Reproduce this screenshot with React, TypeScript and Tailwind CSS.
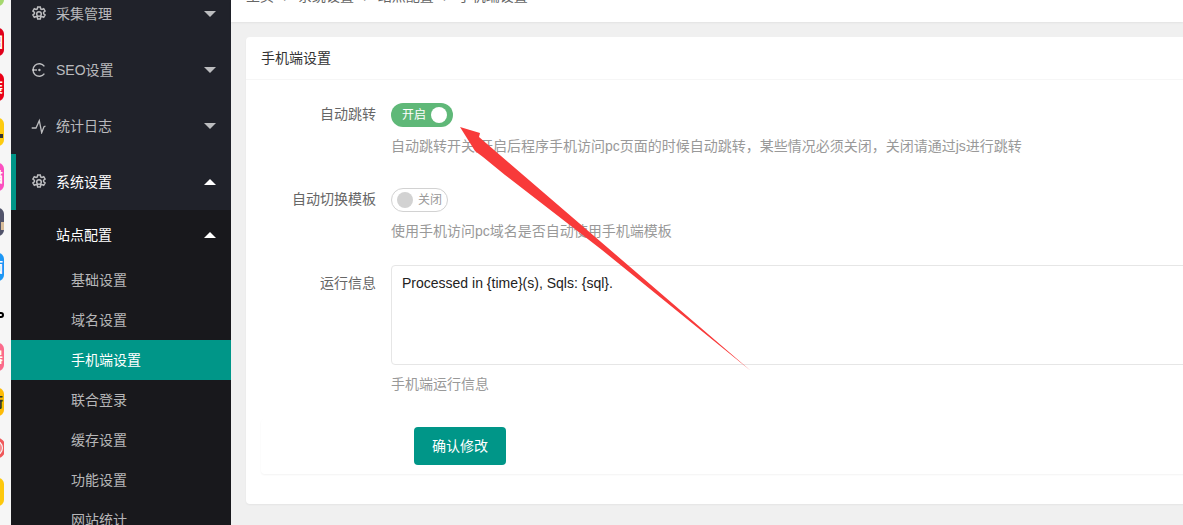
const FONT = "font-['Liberation_Sans','Noto_Sans_CJK_SC',sans-serif]";

type TopItem = { label: string; icon: "gear" | "seo" | "pulse"; open?: boolean };

const TOP_ITEMS: TopItem[] = [
  { label: "采集管理", icon: "gear" },
  { label: "SEO设置", icon: "seo" },
  { label: "统计日志", icon: "pulse" },
  { label: "系统设置", icon: "gear", open: true },
];

const SUB_ITEMS = ["基础设置", "域名设置", "手机端设置", "联合登录", "缓存设置", "功能设置", "网站统计"];

const DOCK = [
  { bg: "bg-[#a5d86f]", glyph: "" },
  { bg: "bg-[#e0001b]", glyph: "图" },
  { bg: "bg-[#ea0017]", glyph: "装" },
  { bg: "bg-[#fdcb0f]", glyph: "" },
  { bg: "bg-[#fb4fc0]", glyph: "猫" },
  { bg: "bg-[#50536a]", glyph: "" },
  { bg: "bg-[#1c97f5]", glyph: "面" },
  { bg: "bg-transparent", glyph: "" },
  { bg: "bg-[#fb6a8b]", glyph: "器" },
  { bg: "bg-[#fdbb07]", glyph: "街" },
  { bg: "bg-transparent", glyph: "" },
  { bg: "bg-[#fdc80c]", glyph: "" },
];

function GearIcon() {
  return (
    <svg viewBox="0 0 16 16" className="h-4 w-4 shrink-0" fill="none" stroke="currentColor" strokeWidth="1.5">
      <path d="M6.7 1h2.6l.4 1.9 1.2.6 1.8-.8 1.4 2.3-1.5 1.3v1.4l1.5 1.3-1.4 2.3-1.8-.8-1.2.6-.4 1.9H6.7l-.4-1.9-1.2-.6-1.8.8-1.4-2.3 1.5-1.3V6.300l-1.500-1.300 1.400-2.300 1.800.8 1.200-.6z" />
      <circle cx="8" cy="8" r="2.3" />
    </svg>
  );
}

function SeoIcon() {
  return (
    <svg viewBox="0 0 16 16" className="h-4 w-4 shrink-0" fill="none" stroke="currentColor" strokeWidth="1.4">
      <path d="M13.400 4.300A6.300 6.300 0 1 0 13.400 11.700" />
      <path d="M1.400 8h4.600" />
      <circle cx="8.400" cy="8" r="1.200" fill="currentColor" stroke="none" />
    </svg>
  );
}

function PulseIcon() {
  return (
    <svg viewBox="0 0 16 16" className="h-4 w-4 shrink-0" fill="none" stroke="currentColor" strokeWidth="1.3">
      <path d="M0.700 10H5L8.300 2.700 10.700 14.700 13 8.700 14.500 8" />
    </svg>
  );
}

function TopRow({ item }: { item: TopItem }) {
  return (
    <div
      className={`flex h-14 items-center pr-[15px] text-sm ${
        item.open ? "border-l-[5px] border-[#009688] pl-[15px] text-white" : "pl-5 text-white/70"
      }`}
    >
      <span className="flex w-[25px] shrink-0 text-white/70">
        {item.icon === "gear" && <GearIcon />}
        {item.icon === "seo" && <SeoIcon />}
        {item.icon === "pulse" && <PulseIcon />}
      </span>
      <span className="flex-1">{item.label}</span>
      <Caret up={item.open} />
    </div>
  );
}

function Caret({ up }: { up?: boolean }) {
  return up ? (
    <span className="h-0 w-0 border-x-[6px] border-b-[6px] border-x-transparent border-b-white" />
  ) : (
    <span className="h-0 w-0 border-x-[6px] border-t-[6px] border-x-transparent border-t-white/70" />
  );
}

function Dock() {
  return (
    <div className="flex h-full w-[11px] shrink-0 flex-col gap-[17px] overflow-hidden bg-[#f6f6f6]">
      {DOCK.map((d, i) => (
        <div
          key={i}
          className={`relative ml-[-24px] flex h-[28px] w-[28px] shrink-0 items-center justify-end overflow-hidden rounded-md text-sm font-bold leading-none ${d.bg} ${
            i === 0 ? "mb-[5px] mt-[-22px] rounded-full" : ""
          } ${i === 9 ? "text-[#333]" : "text-white"}`}
        >
          {d.glyph && <span className="mr-[1px] shrink-0">{d.glyph}</span>}
          {i === 3 && <span className="absolute bottom-[8px] right-[1px] h-[4px] w-[6px] bg-[#333]" />}
          {i === 5 && <span className="absolute bottom-[6px] right-0 h-[8px] w-[3px] bg-[#d8bd9a]" />}
          {i === 7 && <span className="absolute right-0 top-[14px] h-[6px] w-[9px] rounded-full border-2 border-black" />}
          {i === 10 && <span className="absolute right-[-2px] top-[4px] h-[22px] w-[22px] rounded-full border-[3px] border-[#f0585a]" />}
          {i === 10 && <span className="absolute right-[2px] top-[9px] h-[12px] w-[12px] rounded-full border-[2px] border-[#f58a8c]" />}
        </div>
      ))}
    </div>
  );
}

function Sidebar() {
  return (
    <aside className="h-full w-[220px] shrink-0 overflow-hidden bg-[#20222a]">
      <div className="mt-[-14px]">
        {TOP_ITEMS.map((item) => (
          <TopRow key={item.label} item={item} />
        ))}
      </div>
      <div className="bg-[#18181c] text-sm">
        <div className="flex h-[50px] items-center pl-[45px] pr-[15px] text-white">
          <span className="flex-1">站点配置</span>
          <Caret up />
        </div>
        {SUB_ITEMS.map((label) => (
          <div
            key={label}
            className={`flex h-10 items-center pl-[60px] ${
              label === "手机端设置" ? "bg-[#009688] text-white" : "text-white/70"
            }`}
          >
            {label}
          </div>
        ))}
      </div>
    </aside>
  );
}

function Row({ label, children, help, labelTop }: { label: string; children: React.ReactNode; help: string; labelTop: string }) {
  return (
    <div className="flex pl-[15px]">
      <div className={`w-[115px] shrink-0 text-right text-sm leading-5 text-[#666] ${labelTop}`}>{label}</div>
      <div className="ml-[15px] min-w-0 flex-1">
        {children}
        <div className="mt-[9px] h-5 text-sm leading-5 text-[#999]">{help}</div>
      </div>
    </div>
  );
}

export default function App() {
  return (
    <div className={`relative flex h-screen w-full overflow-hidden bg-[#f0f0f0] ${FONT}`}>
      <Dock />
      <Sidebar />
      <main className="min-w-0 flex-1">
        <div className="h-[22px] overflow-hidden bg-white shadow-[0_1px_2px_rgba(0,0,0,0.06)]">
          <div className="mt-[-14px] flex h-5 items-center pl-[15px] text-sm leading-5 text-[#666]">
            <span>主页</span>
            <span className="mx-[10px] text-[#999]">/</span>
            <span>系统设置</span>
            <span className="mx-[10px] text-[#999]">/</span>
            <span>站点配置</span>
            <span className="mx-[10px] text-[#999]">/</span>
            <span>手机端设置</span>
          </div>
        </div>
        <section className="ml-[15px] mr-[-60px] mt-[15px] rounded-sm bg-white pb-[30px] shadow-[0_1px_2px_rgba(0,0,0,0.05)]">
          <header className="flex h-[43px] items-center border-b border-[#f6f6f6] pl-[15px] text-sm text-[#333]">
            手机端设置
          </header>
          <div className="pt-[23px]">
            <Row label="自动跳转" labelTop="pt-[1px]" help="自动跳转开关,开启后程序手机访问pc页面的时候自动跳转，某些情况必须关闭，关闭请通过js进行跳转">
              <div className="flex h-6 w-[62px] items-center justify-between rounded-full bg-[#5fb878] pl-[11px] pr-[6px] text-xs text-white">
                <span>开启</span>
                <span className="h-4 w-4 rounded-full bg-white" />
              </div>
            </Row>
            <div className="h-8" />
            <Row label="自动切换模板" labelTop="pt-[1px]" help="使用手机访问pc域名是否自动使用手机端模板">
              <div className="flex h-6 w-[57px] items-center gap-[5px] rounded-full border border-[#d2d2d2] pl-[5px] text-xs text-[#999]">
                <span className="h-4 w-4 rounded-full bg-[#d2d2d2]" />
                <span>关闭</span>
              </div>
            </Row>
            <div className="h-6" />
            <Row label="运行信息" labelTop="pt-[8px]" help="手机端运行信息">
              <textarea
                readOnly
                defaultValue="Processed in {time}(s), Sqls: {sql}."
                className="block h-[100px] w-full resize-none rounded-sm border border-[#e6e6e6] px-[10px] py-[7px] text-sm leading-5 text-[#222] outline-none"
              />
            </Row>
            <div className="mx-[15px] mt-[25px] h-[55px] rounded-sm pl-[153px] pt-[8px] shadow-[0_1px_2px_rgba(0,0,0,0.05)]">
              <button className="h-[38px] w-[92px] rounded-sm bg-[#009688] text-sm text-white">确认修改</button>
            </div>
          </div>
        </section>
      </main>
      <svg className="pointer-events-none absolute left-0 top-0" width="1183" height="525" viewBox="0 0 1183 525">
        <polygon points="460,127 480,133 479,137 751,371 602,250 505,175 483,157 475,151" fill="#f83a3a" />
      </svg>
    </div>
  );
}
